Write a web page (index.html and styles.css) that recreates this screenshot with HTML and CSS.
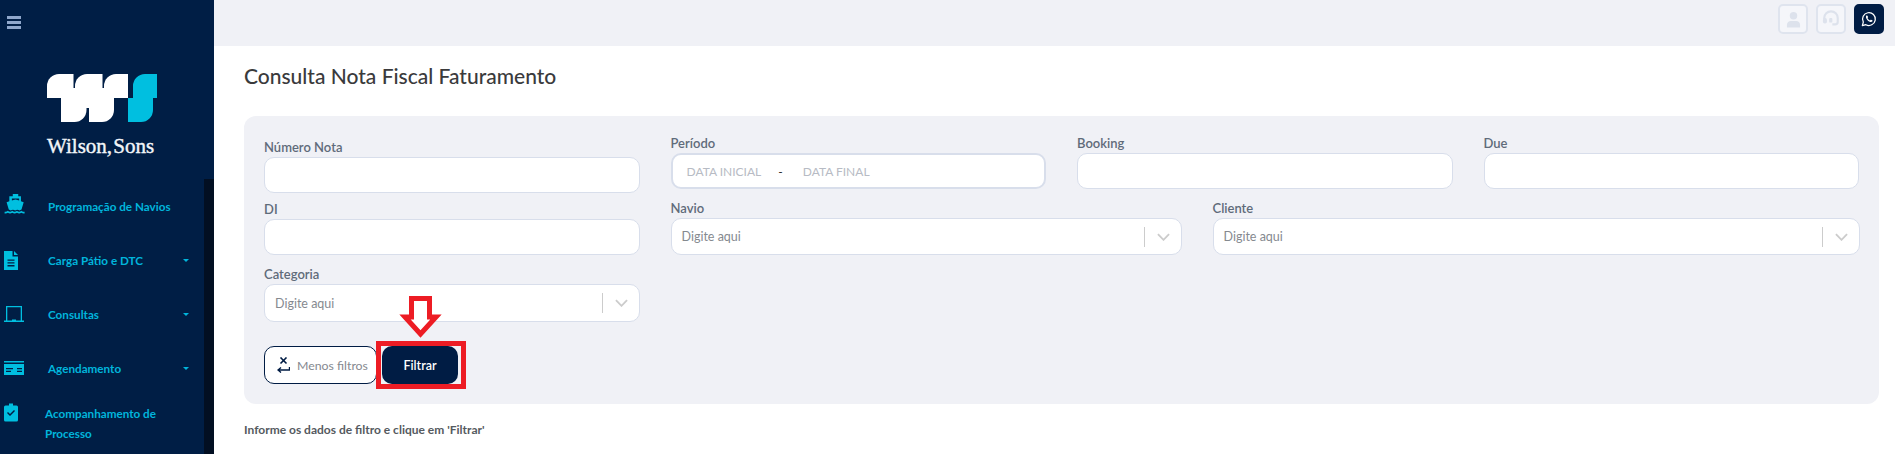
FILE: index.html
```html
<!DOCTYPE html>
<html lang="pt-BR">
<head>
<meta charset="utf-8">
<title>Consulta Nota Fiscal Faturamento</title>
<link rel="stylesheet" href="styles.css">
</head>
<body>
<div class="app">
  <aside class="sidebar">
    <div class="sidebar-top">
      <button class="burger" aria-label="Menu"><span></span><span></span><span></span></button>
      <div class="brand">
        <svg class="brand-mark" width="110" height="48" viewBox="0 0 110 48">
          <g fill="#fff">
            <path d="M0 24V12A12 12 0 0 1 12 0H26.500V24Z"/>
            <path d="M28 24V12A12 12 0 0 1 40 0H55.500V24Z"/>
            <path d="M57 24V12A12 12 0 0 1 69 0H81V24Z"/>
            <rect x="0" y="14" width="81" height="10"/>
            <path d="M14 24H39.500V36A12 12 0 0 1 27.500 48H14Z"/>
            <path d="M42 24H67V36A12 12 0 0 1 55 48H42Z"/>
            <rect x="14" y="24" width="53" height="10"/>
          </g>
          <path fill="#00bfe0" d="M86 24V12A12 12 0 0 1 98 0H110V24H106V36A12 12 0 0 1 94 48H81V24Z"/>
        </svg>
        <div class="brand-name">Wilson, Sons</div>
      </div>
    </div>
    <nav class="nav">
      <a class="nav-item">
        <span class="nav-slot"><svg class="icon-ship" viewBox="0 0 24 22"><path fill-rule="evenodd" d="M9 0h6v2.500h3v5.500l3 1-2.400 8c-.8.200-1.500.6-2.200 1.200-1.400-1.100-3.400-1.100-4.800 0-1.400-1.100-3.400-1.100-4.800 0-.7-.6-1.400-1-2.200-1.200L2.200 9l3-1V2.500H9zM8 5v2.200l4-1.200 4 1.200V5z"/><path d="M0 19.500c1.500.200 2.700-.2 3.600-1 1.400 1.300 3.400 1.300 4.800 0 1.400 1.300 3.800 1.300 5.200 0 1.400 1.300 3.400 1.300 4.800 0 .9.800 2.600 1.200 3.600 1v2c-1.400.2-2.600-.1-3.600-.8-1.500 1-3.300 1-4.800 0-1.600 1-3.600 1-5.200 0-1.500 1-3.300 1-4.800 0-1 .7-2.200 1-3.600.8z"/></svg></span>
        <span class="nav-label">Programação de Navios</span>
      </a>
      <a class="nav-item">
        <span class="nav-slot"><svg class="icon-file" viewBox="0 0 14 19"><path fill-rule="evenodd" d="M0 0h8.500v5.500H14V19H0zM3.500 8.500v1.300h7V8.500zm0 2.800v1.300h7v-1.300zm0 2.800v1.300h7v-1.300zM10 0l4 4h-4z"/></svg></span>
        <span class="nav-label">Carga Pátio e DTC</span><i class="caret"></i>
      </a>
      <a class="nav-item">
        <span class="nav-slot"><svg class="icon-laptop" viewBox="0 0 20 16"><path fill-rule="evenodd" d="M2 0h16v14.500h2V16H0v-1.500h2zm1.300 1.300v13.200h4.700v-1h4v1h4.700V1.300z"/></svg></span>
        <span class="nav-label">Consultas</span><i class="caret"></i>
      </a>
      <a class="nav-item">
        <span class="nav-slot"><svg class="icon-card" viewBox="0 0 20 14"><path fill-rule="evenodd" d="M0 0h20v1.500H0zM0 3h20v11H0zm2 4v1.300h7V7zm11 0v1.300h5V7zM2 9.800v1.300h5V9.800zm11 0v1.300h5V9.800z"/></svg></span>
        <span class="nav-label">Agendamento</span>
        <i class="caret"></i>
      </a>
      <a class="nav-item nav-item-multi">
        <span class="nav-slot"><svg class="icon-file" viewBox="0 0 14 18"><path fill-rule="evenodd" d="M5 0h4v2h3.500A1.500 1.500 0 0 1 14 3.500v13a1.500 1.500 0 0 1-1.500 1.500h-11A1.500 1.500 0 0 1 0 16.500v-13A1.500 1.500 0 0 1 1.500 2H5zM3 9.500l3 3 5-5-1-1-4 4-2-2z"/></svg></span>
        <span class="nav-label">Acompanhamento de Processo</span>
      </a>
    </nav>
  </aside>

  <div class="main">
    <header class="topbar">
      <button class="top-btn" aria-label="Perfil">
        <svg width="15" height="17" viewBox="0 0 16 17"><circle cx="8" cy="4.500" r="4"/><path d="M1 17v-3c0-2.500 2-4 4-4h6c2 0 4 1.500 4 4v3z"/></svg>
      </button>
      <button class="top-btn" aria-label="Suporte">
        <svg width="18" height="18" viewBox="0 0 20 18"><path d="M2.500 9V8a7.500 7.500 0 0 1 15 0V12c0 2-1.500 3-3 3h-3" fill="none" stroke="#dde2ec" stroke-width="2.400"/><rect x="1" y="8" width="4.500" height="6" rx="2"/><rect x="8" y="8" width="3.500" height="5" rx="1"/></svg>
      </button>
      <button class="top-btn top-btn-dark" aria-label="WhatsApp">
        <svg width="16" height="16" viewBox="0 0 18 18"><path d="M1.500 16.500l1.100-4A7.200 7.200 0 1 1 5.500 15.400z" fill="none" stroke="#fff" stroke-width="1.400" stroke-linejoin="round"/><path d="M6.300 5c-.9.800-1 2-.3 3.300.8 1.600 2.200 3 3.800 3.700 1.300.6 2.500.4 3.100-.6.200-.4.100-.7-.2-.9l-1.400-.7c-.3-.1-.5 0-.7.200l-.5.600c-1.200-.4-2.300-1.500-2.800-2.700l.5-.5c.2-.2.300-.5.100-.8L6.900 5c-.2-.2-.4-.2-.6 0z" fill="#fff"/></svg>
      </button>
    </header>

    <main class="content">
      <h1 class="title">Consulta Nota Fiscal Faturamento</h1>
      <form class="panel">
        <div class="row row-1">
          <div class="field field-low">
            <label class="label">Número Nota</label>
            <div class="input"></div>
          </div>
          <div class="field">
            <label class="label">Período</label>
            <div class="input input-range">
              <span class="range-text">DATA INICIAL</span>
              <span class="range-dash">-</span>
              <span class="range-text">DATA FINAL</span>
            </div>
          </div>
          <div class="field">
            <label class="label">Booking</label>
            <div class="input"></div>
          </div>
          <div class="field">
            <label class="label">Due</label>
            <div class="input"></div>
          </div>
        </div>
        <div class="row row-2">
          <div class="field field-di">
            <label class="label">DI</label>
            <div class="input"></div>
          </div>
          <div class="field">
            <label class="label">Navio</label>
            <div class="input input-select">
              <span class="placeholder">Digite aqui</span>
              <span class="select-sep"></span>
              <svg class="chevron" width="13" height="8" viewBox="0 0 14 8"><path d="M1 1l6 6 6-6" fill="none" stroke="#ccc" stroke-width="2"/></svg>
            </div>
          </div>
          <div class="field">
            <label class="label">Cliente</label>
            <div class="input input-select">
              <span class="placeholder">Digite aqui</span>
              <span class="select-sep"></span>
              <svg class="chevron" width="13" height="8" viewBox="0 0 14 8"><path d="M1 1l6 6 6-6" fill="none" stroke="#ccc" stroke-width="2"/></svg>
            </div>
          </div>
        </div>
        <div class="row row-3">
          <div class="field">
            <label class="label">Categoria</label>
            <div class="input input-select input-tall">
              <span class="placeholder">Digite aqui</span>
              <span class="select-sep"></span>
              <svg class="chevron" width="13" height="8" viewBox="0 0 14 8"><path d="M1 1l6 6 6-6" fill="none" stroke="#ccc" stroke-width="2"/></svg>
            </div>
          </div>
        </div>
        <div class="actions">
          <button type="button" class="btn btn-outline">
            <svg width="13" height="16" viewBox="0 0 13 16"><path d="M3.500 0.500l6 6M9.500 0.500l-6 6" stroke="#001c44" stroke-width="1.600" fill="none"/><path d="M12.500 10v3H1.500M4 10.500L1 13l3 2.500" stroke="#001c44" stroke-width="1.400" fill="none"/></svg>
            Menos filtros
          </button>
          <button type="button" class="btn btn-primary">
            Filtrar
            <span class="mark-frame"></span>
            <svg class="mark-arrow" width="47" height="47" viewBox="0 0 47 47"><path d="M14.500 4.500H32.500V23H39L23.500 40 8 23h6.500z" fill="#fff" stroke="#ed1c24" stroke-width="5"/></svg>
          </button>
        </div>
      </form>
      <p class="hint">Informe os dados de filtro e clique em 'Filtrar'</p>
    </main>
  </div>
</div>
</body>
</html>
```

FILE: styles.css
```css
* { box-sizing: border-box; }

html, body {
  margin: 0;
  height: 454px;
  overflow: hidden;
  background: #fff;
  font-family: "Lato", "Open Sans", sans-serif;
}

.app { display: flex; height: 454px; }

/* Sidebar */
.sidebar {
  width: 214px;
  flex: none;
  display: flex;
  flex-direction: column;
  background: #001e45;
}
.sidebar-top { height: 179px; flex: none; padding: 16px 0 0 7px; }
.burger {
  display: flex;
  flex-direction: column;
  gap: 2px;
  width: 14px;
  padding: 0;
  border: 0;
  background: none;
}
.burger span { display: block; width: 14px; height: 3px; background: #8fa7cb; }
.brand {
  display: flex;
  flex-direction: column;
  margin: 45px 0 0 40px;
  width: 110px;
}
.brand-mark { display: block; }
.brand-name {
  margin-top: 12px;
  font-family: "Liberation Serif", serif;
  font-size: 21px;
  font-weight: 400;
  line-height: 24px;
  word-spacing: -4px;
  -webkit-text-stroke: 0.4px #f2f5f8;
  color: #f2f5f8;
  white-space: nowrap;
}
.nav {
  flex: 1;
  border-right: 10px solid #020f22;
  display: flex;
  flex-direction: column;
  overflow: hidden;
}
.nav-item {
  height: 54px;
  flex: none;
  display: flex;
  align-items: center;
  padding: 0 0 0 4px;
  color: #00b5dc;
  font-size: 11.700px;
  font-weight: 700;
}
.nav-slot { width: 44px; flex: none; display: flex; align-items: center; }
.nav-slot svg { display: block; fill: #00bfe0; }
.icon-ship { width: 23px; height: 20px; margin-top: -4px; }
.icon-file { width: 14px; height: 19px; }
.icon-laptop { width: 20px; height: 16px; }
.icon-card { width: 20px; height: 14px; }
.nav-label { white-space: nowrap; }
.caret {
  margin-left: auto;
  margin-right: 15px;
  width: 0;
  height: 0;
  border-left: 3px solid transparent;
  border-right: 3px solid transparent;
  border-top: 3px solid #00b5dc;
}
.nav-item-multi { height: auto; align-items: flex-start; padding-top: 8px; }
.nav-item-multi .nav-slot { width: 41px; }
.nav-item-multi .nav-label { white-space: normal; width: 130px; line-height: 20px; }

/* Main */
.main { flex: 1; min-width: 0; display: flex; flex-direction: column; }
.topbar {
  height: 46px;
  flex: none;
  display: flex;
  justify-content: flex-end;
  gap: 8px;
  padding: 4px 11px 0 0;
  background: #f0f1f6;
}
.top-btn {
  width: 30px;
  height: 30px;
  padding: 0;
  display: flex;
  align-items: center;
  justify-content: center;
  border: 2px solid #dfe4ee;
  border-radius: 5px;
  background: #f5f6fa;
  fill: #dde2ec;
}
.top-btn-dark { background: #001c44; border-color: #001c44; }

.content { padding: 15px 16px 0 30px; }
.title {
  margin: 0 0 25px;
  font-size: 21px;
  font-weight: 500;
  line-height: 30px;
  color: #3a3a3c;
}
.panel {
  height: 288px;
  padding: 16px 20px 20px;
  border-radius: 12px;
  background: #f0f1f6;
}
.row { display: grid; column-gap: 31px; }
.row-1 { grid-template-columns: repeat(4, 1fr); height: 61px; }
.row-2 { grid-template-columns: 375.500px 511px 647px; margin-top: 4px; height: 58px; }
.row-3 { grid-template-columns: 375.500px; margin-top: 8px; }
.field { display: flex; flex-direction: column; min-width: 0; }
.field-low { padding-top: 4px; }
.field-di { padding-top: 1px; }
.label {
  height: 21px;
  font-size: 13px;
  font-weight: 600;
  line-height: 22px;
  color: #5f6b7a;
}
.input {
  height: 36px;
  border: 1px solid #d8deeb;
  border-radius: 10px;
  background: #fff;
  display: flex;
  align-items: center;
}
.row-2 .field:not(.field-di) .input { height: 37px; }
.row-3 .input-tall { height: 38px; }
.input-range { border-width: 2px; padding-left: 14px; font-size: 12px; }
.range-text { color: #b7bbc4; }
.range-dash { margin: 0 20px 0 17px; color: #222; }
.input-select { padding: 0 11px 0 10px; font-size: 12.500px; }
.placeholder { flex: 1; color: #85898f; }
.select-sep { width: 1px; height: 20px; background: #ccc; margin-right: 12px; }

.actions { display: flex; gap: 5px; margin-top: 24px; }
.btn {
  height: 38px;
  border-radius: 10px;
  font-family: inherit;
  padding: 0;
}
.btn-outline {
  width: 113px;
  display: flex;
  align-items: center;
  gap: 7px;
  padding-left: 12px;
  background: #fff;
  border: 1px solid #001c44;
  color: #85898f;
  font-size: 12.300px;
}
.btn-primary {
  position: relative;
  width: 76px;
  border: 0;
  background: #001c44;
  color: #fff;
  font-weight: 600;
  font-size: 12.500px;
}
.mark-frame {
  position: absolute;
  left: -6px;
  right: -8px;
  top: -5px;
  bottom: -5px;
  border: 5px solid #ed1c24;
  pointer-events: none;
}
.mark-arrow { position: absolute; left: 15px; top: -52px; }
.hint {
  margin: 18px 0 0;
  font-size: 12px;
  font-weight: 700;
  line-height: 16px;
  color: #555a60;
}
```
